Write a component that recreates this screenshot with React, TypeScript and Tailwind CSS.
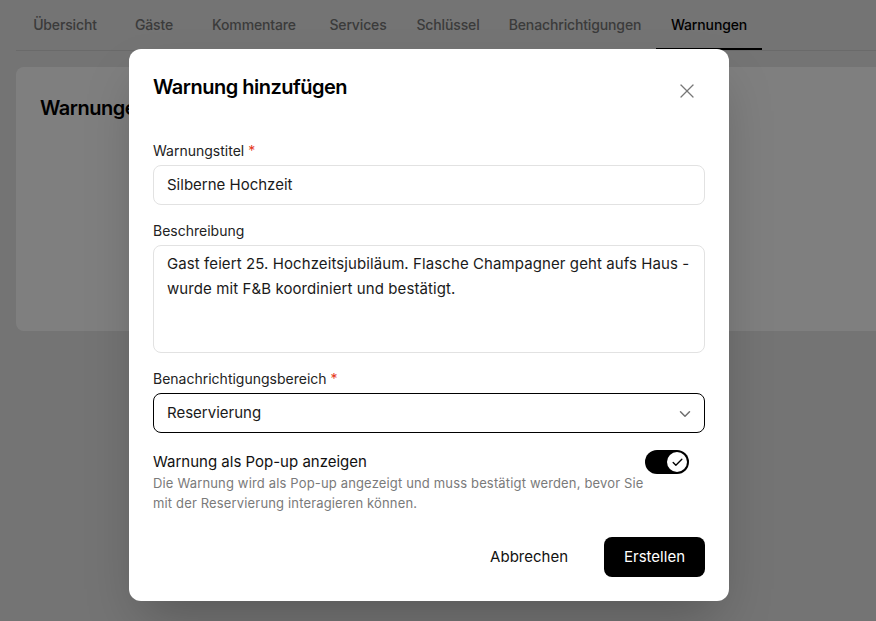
import { X, ChevronDown, Check } from 'lucide-react';

const tabs = [
  { label: 'Übersicht', w: 'w-[98px]' },
  { label: 'Gäste', w: 'w-[80px]' },
  { label: 'Kommentare', w: 'w-[120px]' },
  { label: 'Services', w: 'w-[88px]' },
  { label: 'Schlüssel', w: 'w-[92px]' },
  { label: 'Benachrichtigungen', w: 'w-[162px]' },
  { label: 'Warnungen', w: 'w-[106px]', active: true },
];

const Required = () => <span className="ml-1 text-[#e5391a]">*</span>;

const App = () => {
  return (
    <div className="relative h-[621px] w-full overflow-hidden bg-[#e8e8e8] font-['Inter',sans-serif] text-[#111]">
      {/* Tabs */}
      <div className="ml-4 flex border-b border-[#d4d4d4]">
        {tabs.map((t) => (
          <div
            key={t.label}
            className={`flex h-[50px] shrink-0 items-center justify-center border-b-2 text-[14px] font-medium tracking-[-0.01em] ${t.w} ${
              t.active ? 'border-black text-black' : 'border-transparent text-[#767676]'
            }`}
          >
            {t.label}
          </div>
        ))}
      </div>

      {/* Page card */}
      <div className="ml-4 mt-4 h-[264px] rounded-l-lg bg-white pl-6 pt-[27px]">
        <h1 className="text-[20px] font-semibold leading-7 tracking-[-0.025em] text-black">Warnungen</h1>
      </div>

      {/* Overlay + dialog */}
      <div className="absolute inset-0 bg-black/50 pl-[129px] pt-[49px]">
        <div className="w-[600px] rounded-xl bg-white p-6 shadow-2xl">
          {/* Header */}
          <div className="flex items-start justify-between">
            <h2 className="text-[20px] font-semibold leading-7 tracking-[-0.025em] text-black">
              Warnung hinzufügen
            </h2>
            <button className="mr-[2px] mt-[2px] flex h-8 w-8 items-center justify-center text-[#777]">
              <X size={24} strokeWidth={1.25} />
            </button>
          </div>

          {/* Title */}
          <div className="mt-[34px]">
            <label className="block text-[14px] leading-5 text-[#222]">
              Warnungstitel
              <Required />
            </label>
            <div className="mt-1 flex h-10 items-center rounded-lg border border-[#e2e2e2] px-[13px] text-[15px] text-[#1a1a1a]">
              Silberne Hochzeit
            </div>
          </div>

          {/* Description */}
          <div className="mt-4">
            <label className="block text-[14px] leading-5 text-[#222]">Beschreibung</label>
            <div className="mt-1 h-[108px] rounded-lg border border-[#e2e2e2] px-[13px] pt-[5px] text-[15px] leading-[25px] tracking-[0.006em] text-[#1a1a1a]">
              <span className="block whitespace-nowrap">
                Gast feiert 25. Hochzeitsjubiläum. Flasche Champagner geht aufs Haus -
              </span>
              <span className="block whitespace-nowrap">wurde mit F&amp;B koordiniert und bestätigt.</span>
            </div>
          </div>

          {/* Area select */}
          <div className="mt-4">
            <label className="block text-[14px] leading-5 text-[#222]">
              Benachrichtigungsbereich
              <Required />
            </label>
            <div className="mt-1 flex h-10 items-center justify-between rounded-lg border border-black pl-[13px] pr-[10px] text-[15px] text-[#1a1a1a]">
              <span>Reservierung</span>
              <ChevronDown size={18} strokeWidth={2} className="mt-px text-[#6f6f6f]" />
            </div>
          </div>

          {/* Popup toggle */}
          <div className="mt-[18px] flex items-start justify-between pr-4">
            <div className="w-[492px]">
              <div className="text-[15px] leading-[22px] text-[#111]">Warnung als Pop-up anzeigen</div>
              <p className="text-[13px] leading-5 tracking-[0.012em] text-[#7a7a7a]">
                <span className="block whitespace-nowrap">
                  Die Warnung wird als Pop-up angezeigt und muss bestätigt werden, bevor Sie
                </span>
                <span className="block whitespace-nowrap">mit der Reservierung interagieren können.</span>
              </p>
            </div>
            <div className="-mt-px flex h-6 w-11 items-center justify-end rounded-full bg-black pr-[2px]">
              <div className="flex h-5 w-5 items-center justify-center rounded-full bg-white">
                <Check size={13} strokeWidth={2.5} className="text-black" />
              </div>
            </div>
          </div>

          {/* Actions */}
          <div className="mt-6 flex justify-end gap-4">
            <button className="h-10 rounded-lg px-5 text-[15px] text-[#111]">Abbrechen</button>
            <button className="h-10 rounded-lg bg-black px-5 text-[15px] text-white">Erstellen</button>
          </div>
        </div>
      </div>
    </div>
  );
};

export default App;
